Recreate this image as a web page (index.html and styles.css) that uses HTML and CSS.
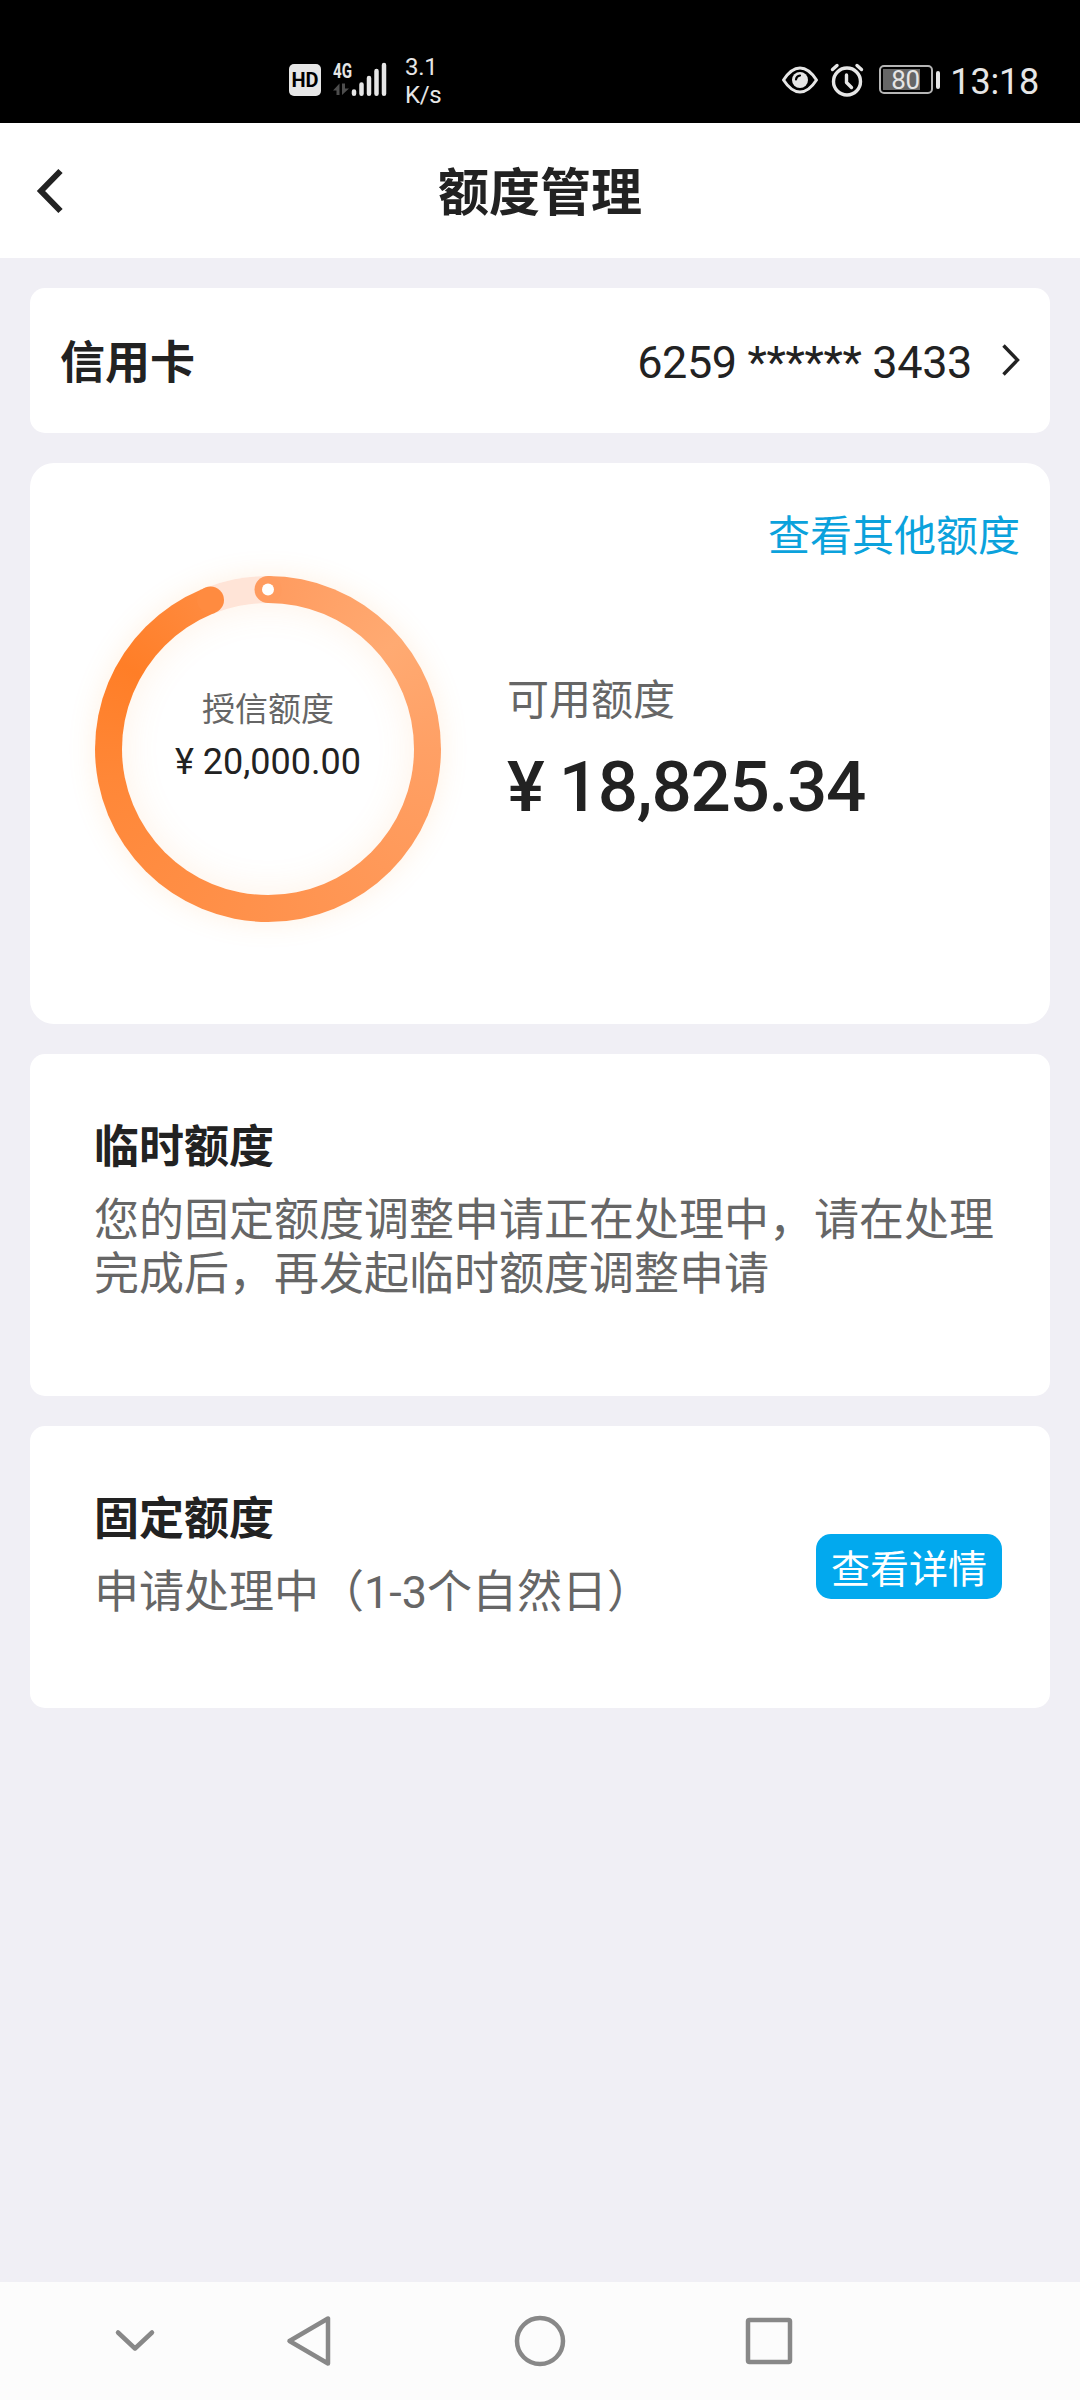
FILE: index.html
```html
<!DOCTYPE html>
<html lang="zh-CN">
<head>
<meta charset="utf-8">
<title>额度管理</title>
<link rel="stylesheet" href="styles.css">
</head>
<body>
<div class="status">
  <div class="status-left">
    <span class="hd">HD</span>
    <svg class="signal" width="56" height="38" viewBox="0 0 56 38">
      <text class="signal-text" x="0" y="17.500" textLength="19" lengthAdjust="spacingAndGlyphs">4G</text>
      <path fill="#4d4d4d" d="M0 30.500 6.500 23.500V35H3.500V30.500ZM9 23.500h3V28.500H16L9 35Z"/>
      <path stroke="#e6e6e6" stroke-width="4.500" stroke-linecap="round" d="M21 31.500v2.200M28.500 24.500v9.200M36 18v15.700M43.500 11v22.700M51 5v28.700"/>
    </svg>
    <span class="speed">3.1<br>K/s</span>
  </div>
  <div class="status-right">
    <svg class="eye" width="38" height="30" viewBox="0 0 38 30">
      <path fill="none" stroke="#e6e6e6" stroke-width="3" stroke-linejoin="round" d="M2.500 15C8 6.500 13 3 19 3s11 3.500 16.500 12C30 23.500 25 27 19 27S8 23.500 2.500 15Z"/>
      <circle cx="19" cy="15" r="8" fill="#e6e6e6"/>
      <path d="M15 14.500a4.500 4.500 0 0 1 4-4" fill="none" stroke="#000" stroke-width="2.200" stroke-linecap="round"/>
    </svg>
    <svg class="alarm" width="34" height="34" viewBox="0 0 34 34">
      <g fill="none" stroke="#e6e6e6" stroke-width="3.400" stroke-linecap="round" stroke-linejoin="round">
        <circle cx="17" cy="18.500" r="13.500"/>
        <path d="M16.500 12v7.500l5 5M2.500 6.500l4.500-4M31.500 6.500l-4.500-4"/>
      </g>
    </svg>
    <span class="battery"><span class="battery-level">80</span></span>
    <span class="battery-tip"></span>
    <span class="clock">13:18</span>
  </div>
</div>

<header class="header">
  <svg class="back" width="30" height="48" viewBox="0 0 30 48">
    <path fill="none" stroke="#222" stroke-width="6" d="M25.500 4 6 24l19.500 20"/>
  </svg>
  <h1 class="title">额度管理</h1>
</header>

<main class="content">
  <section class="card account">
    <span class="account-label">信用卡</span>
    <span class="account-number">6259 ****** 3433</span>
    <svg class="chevron" width="18" height="32" viewBox="0 0 18 32">
      <path fill="none" stroke="#222" stroke-width="3.400" d="M1.500 1.500 15.500 16l-14 14.500"/>
    </svg>
  </section>

  <section class="card limit">
    <a class="link">查看其他额度</a>
    <div class="limit-row">
      <div class="ring">
        <div class="ring-hole">
          <span class="credit-label">授信额度</span>
          <span class="credit-value">¥ 20,000.00</span>
        </div>
        <svg class="ring-caps" width="346" height="346" viewBox="0 0 346 346">
          <circle cx="115.500" cy="24" r="13.500" fill="#ff8b40"/>
          <circle cx="173" cy="13.500" r="13.500" fill="#ff9b5f"/>
          <circle cx="173" cy="13.500" r="6" fill="#fff"/>
        </svg>
      </div>
      <div class="available">
        <span class="available-label">可用额度</span>
        <span class="available-value">¥ 18,825.34</span>
      </div>
    </div>
  </section>

  <section class="card item temp">
    <div class="item-body">
      <h2 class="item-title">临时额度</h2>
      <p class="item-text">您的固定额度调整申请正在处理中，请在处理完成后，再发起临时额度调整申请</p>
    </div>
  </section>

  <section class="card item fixed">
    <div class="item-body">
      <h2 class="item-title">固定额度</h2>
      <p class="item-text">申请处理中（1-3个自然日）</p>
    </div>
    <button class="detail">查看详情</button>
  </section>
</main>

<nav class="nav">
  <svg class="nav-down" width="42" height="26" viewBox="0 0 42 26"><path d="M4 4.500l17 16 17-16"/></svg>
  <svg class="nav-back" width="48" height="54" viewBox="0 0 48 54"><path d="M43 4.500v45L4.500 27Z"/></svg>
  <svg class="nav-home" width="54" height="54" viewBox="0 0 54 54"><circle cx="27" cy="27" r="23"/></svg>
  <svg class="nav-recent" width="50" height="50" viewBox="0 0 50 50"><rect x="4" y="4" width="42" height="42" rx="1.500"/></svg>
</nav>
</body>
</html>
```
FILE: styles.css
```css
* { box-sizing: border-box; }
body {
  margin: 0;
  width: 1080px;
  height: 2400px;
  display: flex;
  flex-direction: column;
  background: #f0eff5;
  color: #222;
  font-family: Roboto, "Noto Sans CJK SC", sans-serif;
}
h1, h2, p { margin: 0; }
svg { display: block; flex: none; }

.status {
  height: 123px;
  background: #000;
  color: #e6e6e6;
  display: flex;
  justify-content: space-between;
  padding: 0 41px 0 289px;
}
.status-left, .status-right { display: flex; align-items: flex-start; }
.hd {
  width: 32px;
  height: 32px;
  margin-top: 64px;
  border-radius: 5px;
  background: #e6e6e6;
  color: #000;
  font-weight: 700;
  font-size: 20px;
  line-height: 33px;
  text-align: center;
}
.signal { margin: 60px 0 0 12px; }
.signal-text { font-size: 20px; font-weight: 700; fill: #e6e6e6; }
.speed { margin: 54px 0 0 16px; font-size: 24px; line-height: 27.500px; letter-spacing: -0.300px; }
.eye { margin-top: 65px; }
.alarm { margin: 63px 0 0 11px; }
.battery {
  width: 54px;
  height: 29px;
  margin: 65px 0 0 15px;
  border: 2px solid #b5b5b5;
  border-radius: 5px;
  padding: 2px 2px;
  display: flex;
}
.battery-level {
  width: 46px;
  height: 21px;
  padding-left: 8px;
  background: linear-gradient(90deg, #666 37px, transparent 37px);
  font-size: 26px;
  line-height: 22px;
  letter-spacing: -0.500px;
}
.battery-tip { width: 4px; height: 18px; margin: 71px 0 0 3px; border-radius: 2px; background: #e6e6e6; }
.clock { margin: 61px 0 0 10px; font-size: 36px; line-height: 42px; letter-spacing: -0.200px; }

.header {
  height: 135px;
  background: #fff;
  display: grid;
  grid-template-columns: 1fr auto 1fr;
  align-items: center;
  padding: 0 35px;
}
.title { grid-column: 2; font-size: 51px; line-height: 60px; padding-top: 7px; font-weight: 700; }

.content { flex: 1; display: flex; flex-direction: column; gap: 30px; padding: 30px; }
.card { background: #fff; border-radius: 15px; }

.account {
  height: 145px;
  display: flex;
  align-items: center;
  padding: 4px 30px 0;
  font-size: 45px;
  line-height: 53px;
}
.account-label { flex: 1; padding-top: 2px; font-weight: 700; }
.account-number { letter-spacing: -0.380px; }
.chevron { margin: 0 0 5px 30px; }

.limit { height: 561px; border-radius: 24px; padding: 49px 30px 0 65px; display: flex; flex-direction: column; }
.link { align-self: flex-end; color: #0ba2dc; font-size: 42px; line-height: 50px; }
.limit-row { display: flex; gap: 66px; margin-top: 14px; }
.ring {
  position: relative;
  width: 346px;
  height: 346px;
  padding: 27px;
  border-radius: 50%;
  background: conic-gradient(#ff9b5f 0deg, #ffaa72 50deg, #ffa065 90deg, #ff924d 180deg, #ff8737 260deg, #ff7e27 300deg, #ff8b40 338.900deg, #ffe4d7 338.900deg, #ffe4d7 360deg);
  box-shadow: 0 0 28px rgba(255, 165, 80, 0.160);
}
.ring-hole {
  height: 292px;
  padding-top: 87px;
  border-radius: 50%;
  background: #fff;
  box-shadow: inset 0 0 36px rgba(255, 165, 80, 0.140);
  display: flex;
  flex-direction: column;
  align-items: center;
  gap: 12px;
}
.ring-caps { position: absolute; left: 0; top: 0; }
.credit-label { font-size: 33px; line-height: 40px; color: #666; }
.credit-value { font-size: 36px; line-height: 40px; }
.available { display: flex; flex-direction: column; gap: 21px; padding-top: 100px; }
.available-label { font-size: 42px; line-height: 50px; color: #666; }
.available-value { font-size: 71px; line-height: 80px; font-weight: 500; letter-spacing: -1.300px; word-spacing: -1px; }

.item { display: flex; padding: 67px 48px 0 64px; }
.temp { height: 342px; }
.fixed { height: 282px; }
.item-body { flex: 1; display: flex; flex-direction: column; gap: 20px; }
.item-title { font-size: 45px; line-height: 53px; font-weight: 700; }
.item-text { font-size: 45px; line-height: 54px; color: #666; }
.detail {
  width: 186px;
  height: 65px;
  margin-top: 41px;
  padding: 7px 0 0;
  border: 0;
  border-radius: 15px;
  background: #02a9ee;
  color: #fff;
  font: inherit;
  font-size: 39px;
  line-height: 58px;
}

.nav { height: 118px; background: #fcfcfc; display: flex; align-items: center; padding-left: 114px; }
.nav svg { fill: none; stroke: #888; stroke-width: 4.500; stroke-linecap: round; stroke-linejoin: round; }
.nav-back { margin-left: 129px; }
.nav-home { margin-left: 180px; }
.nav-recent { margin-left: 177px; }
```
